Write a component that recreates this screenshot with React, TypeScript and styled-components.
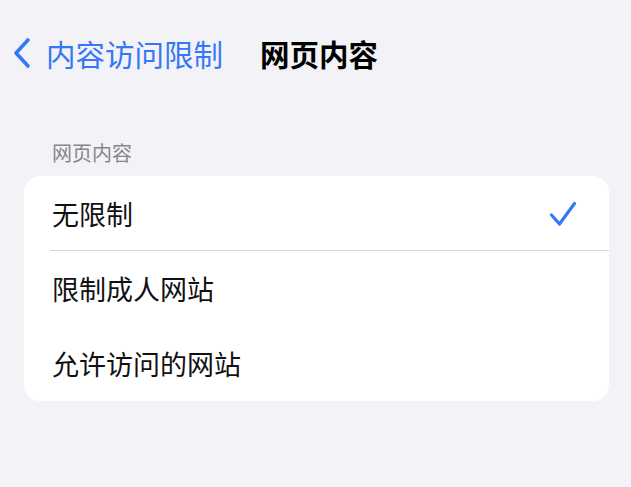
import React from 'react'
import styled, { createGlobalStyle } from 'styled-components'

const GlobalStyle = createGlobalStyle`
  html, body {
    margin: 0;
    padding: 0;
    background: #f2f2f7;
  }
  body {
    font-family: "Noto Sans CJK SC", "Noto Sans", sans-serif;
    -webkit-font-smoothing: antialiased;
  }
`

const Page = styled.div`
  width: 631px;
  height: 487px;
  background: #f2f2f7;
  overflow: hidden;
`

const NavBar = styled.div`
  height: 106px;
  display: flex;
  align-items: center;
  padding-left: 12px;
  box-sizing: border-box;
`

const BackButton = styled.div`
  display: flex;
  align-items: center;
  gap: 14px;
  color: #3478f6;
  font-size: 29.5px;
  line-height: 34px;
`

const Title = styled.div`
  margin-left: 37px;
  font-size: 29.5px;
  line-height: 34px;
  font-weight: 600;
  color: #000;
`

const Section = styled.div`
  padding: 35px 22px 0 24px;
`

const SectionLabel = styled.div`
  padding-left: 28px;
  font-size: 20px;
  line-height: 24px;
  color: #86868b;
  margin-bottom: 11px;
`

const Card = styled.div`
  background: #fff;
  border-radius: 16px;
  overflow: hidden;
`

const Row = styled.div<{ $divider?: boolean }>`
  position: relative;
  height: 75px;
  display: flex;
  align-items: center;
  justify-content: space-between;
  padding: 0 32px 0 28px;
  font-size: 27px;
  color: #111;

  &::after {
    content: '';
    display: ${(p) => (p.$divider ? 'block' : 'none')};
    position: absolute;
    left: 26px;
    right: 0;
    bottom: 0;
    height: 1px;
    background: #d6d6da;
  }
`

const Chevron = () => (
  <svg width="20" height="32" viewBox="0 0 20 32">
    <path
      d="M16 3 L4 16 L16 29"
      fill="none"
      stroke="#3478f6"
      strokeWidth="3.6"
      strokeLinecap="round"
      strokeLinejoin="round"
    />
  </svg>
)

const Check = () => (
  <svg width="28" height="26" viewBox="0 0 28 26">
    <path
      d="M2.5 14 L10.5 23 L25.5 2.5"
      fill="none"
      stroke="#3478f6"
      strokeWidth="3.2"
      strokeLinecap="round"
      strokeLinejoin="round"
    />
  </svg>
)

const options = [
  { label: '无限制', selected: true },
  { label: '限制成人网站', selected: false },
  { label: '允许访问的网站', selected: false },
]

export default function App() {
  return (
    <Page>
      <GlobalStyle />
      <NavBar>
        <BackButton>
          <Chevron />
          <span>内容访问限制</span>
        </BackButton>
        <Title>网页内容</Title>
      </NavBar>
      <Section>
        <SectionLabel>网页内容</SectionLabel>
        <Card>
          {options.map((o, i) => (
            <Row key={o.label} $divider={i === 0}>
              <span>{o.label}</span>
              {o.selected && <Check />}
            </Row>
          ))}
        </Card>
      </Section>
    </Page>
  )
}
